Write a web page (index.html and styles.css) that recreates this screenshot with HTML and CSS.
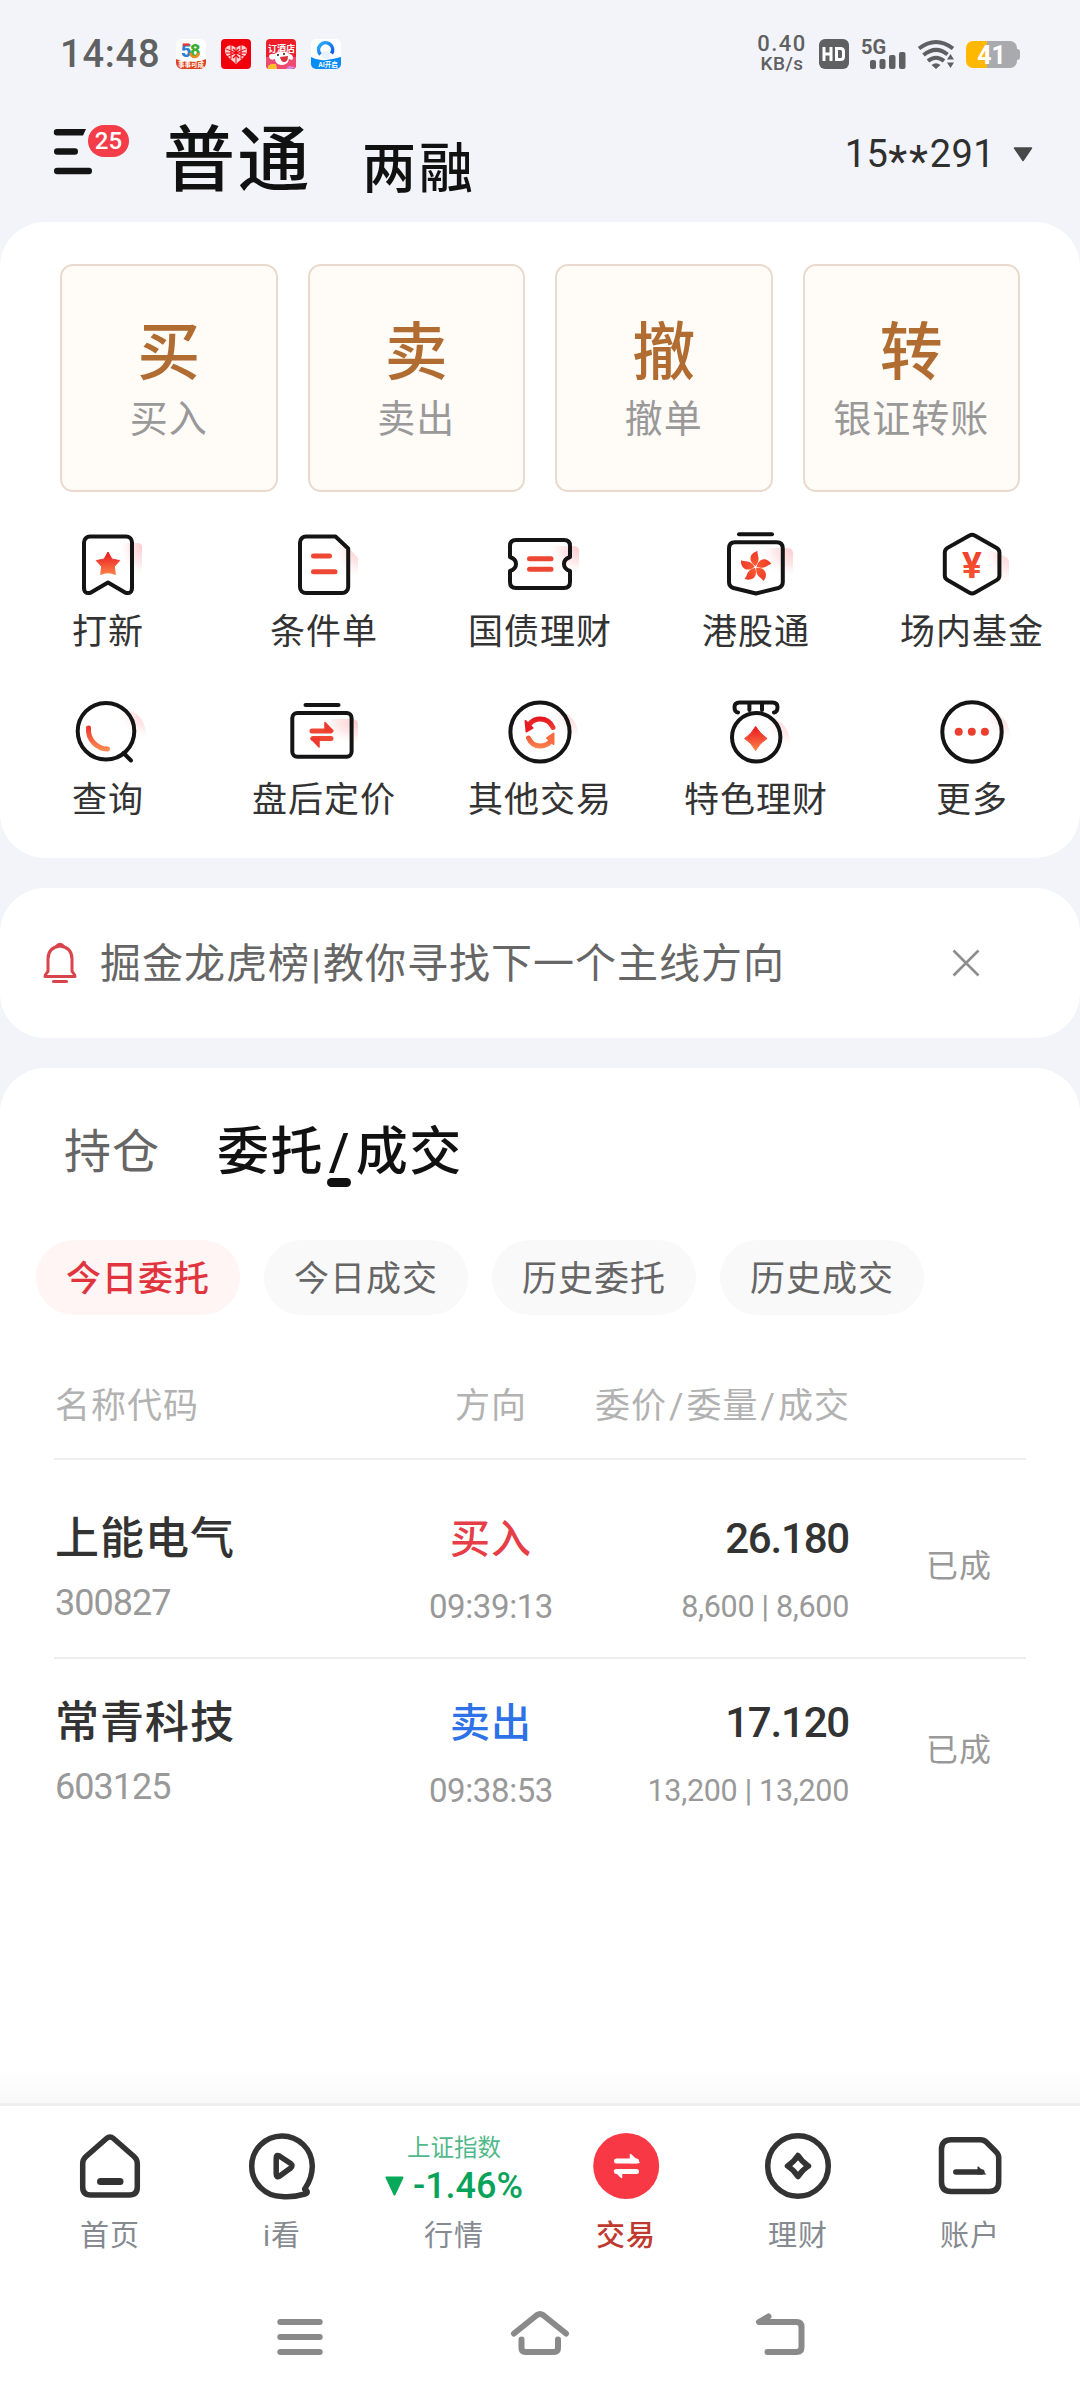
FILE: index.html
```html
<!DOCTYPE html>
<html lang="zh-CN">
<head>
<meta charset="utf-8">
<title>交易</title>
<link rel="stylesheet" href="styles.css">
</head>
<body>
<svg class="defs" width="0" height="0" aria-hidden="true">
  <defs>
    <linearGradient id="hot" x1="0" y1="0" x2="0" y2="1"><stop offset="0" stop-color="#ea1520"/><stop offset="1" stop-color="#fb8148"/></linearGradient>
    <linearGradient id="warm" x1="0" y1="0" x2="0" y2="1"><stop offset="0" stop-color="#ee3a28"/><stop offset="1" stop-color="#fb5a34"/></linearGradient>
    <linearGradient id="arc" gradientUnits="userSpaceOnUse" x1="0" y1="20" x2="0" y2="54"><stop offset="0" stop-color="#e50f1e"/><stop offset="1" stop-color="#fb8a50"/></linearGradient>
    <radialGradient id="glow" cx="1" cy="0.1" r="0.95"><stop offset="0" stop-color="#fccdcf"/><stop offset="0.45" stop-color="#fde3e4" stop-opacity="0.8"/><stop offset="0.9" stop-color="#ffffff" stop-opacity="0"/></radialGradient>
    <linearGradient id="q" x1="0" y1="0" x2="1" y2="1"><stop offset="0" stop-color="#30b0ff"/><stop offset="1" stop-color="#0a5ae0"/></linearGradient>
  </defs>
</svg>

<header class="statusbar">
  <div class="clock">14:48</div>
  <div class="apps">
    <svg width="30" height="30" viewBox="0 0 30 30"><rect width="30" height="30" rx="6" fill="#fff"/><path d="M0 20l5 2h20l5-2v4a6 6 0 0 1-6 6H6a6 6 0 0 1-6-6z" fill="#e0431c"/><text x="5" y="18" class="a58" fill="#2d7fd0">5</text><text x="14" y="18" class="a58" fill="#3fae2a">8</text><path d="M14.6 14a4 4 0 1 0 8 0" fill="none" stroke="#ee8a1d" stroke-width="2.6"/><path d="M6.8 5.600h6.500" stroke="#e33" stroke-width="2.400"/><text x="2" y="28" class="atiny" fill="#fff">事事可成</text></svg>
    <svg width="30" height="30" viewBox="0 0 30 30"><rect width="30" height="30" rx="4" fill="#f0000c"/><path d="M15 25L6 17Q3 13 4.500 9 8 5 12 7l3 2 3-2q4-2 7.500 2 1.500 4-1.500 8z" fill="#fbd6d6"/><path d="M5 10l20 8M25 10L5 18M10 6v14M20 6v14M15 9v15M5 14h20" stroke="#f0000c" stroke-width="1"/><path d="M12 10l3 3 3-3M12 19l3-3 3 3" fill="none" stroke="#f0000c" stroke-width="1.400"/></svg>
    <svg width="30" height="30" viewBox="0 0 30 30"><rect width="30" height="30" rx="4" fill="#ef1c2a"/><path d="M0 18h30v8a4 4 0 0 1-4 4H4a4 4 0 0 1-4-4z" fill="#ef4a70"/><text x="2" y="12.500" class="ahotel" fill="#fff">订酒店</text><path d="M3 18q0-4 5-3 7-5 14-1l4 2q2 3 0 5l-3-1q-1 6-8 6-6-1-6-6-5 2-6-2z" fill="#fff"/><path d="M14 18l8-1q0 6-4 6-3 0-4-5z" fill="#d8343a"/><circle cx="12" cy="16" r="1" fill="#222"/><circle cx="18" cy="15" r="1" fill="#222"/><path d="M2 30v-3l3-2h5l1 5z" fill="#fbbf2e"/><path d="M20 30l3-3 6 1-3 2z" fill="#d58be8"/></svg>
    <svg width="30" height="30" viewBox="0 0 30 30"><rect width="30" height="30" rx="5" fill="#fff"/><path d="M0 18q7 4 15 3t15-3v7a5 5 0 0 1-5 5H5a5 5 0 0 1-5-5z" fill="#0a8cf5"/><path d="M9.500 15.500a7 7 0 1 1 11-1" fill="none" stroke="url(#q)" stroke-width="3.600"/><circle cx="15" cy="16" r="4" fill="#e6f3ff"/><text x="7.500" y="28" class="atiny" fill="#fff">AI开启</text></svg>
  </div>
  <div class="spacer"></div>
  <div class="speed"><span>0.40</span><span>KB/s</span></div>
  <svg class="hd" width="30" height="30" viewBox="0 0 30 30"><rect width="30" height="30" rx="6" fill="#5f6062"/><path d="M5 8v14M12 8v14M5 15h7M17.500 9.500h4q3 0 3 3v5q0 3-3 3h-4z" fill="none" stroke="#fff" stroke-width="3"/></svg>
  <svg class="cell" width="46" height="30" viewBox="0 0 46 30"><text x="0" y="15" class="g5">5G</text><g fill="#5f6062"><rect x="9" y="21" width="6" height="9" rx="2"/><rect x="18.500" y="20" width="6" height="10" rx="2"/><rect x="28" y="16" width="6.500" height="14" rx="2"/><rect x="38" y="13" width="6.500" height="17" rx="2"/></g></svg>
  <svg class="wifi" width="36" height="30" viewBox="0 0 36 30"><g fill="none" stroke="#5f6062" stroke-width="4"><path d="M1 9.500Q18-3.500 35 9.500"/><path d="M5.500 16Q18 6 29.500 15.500"/><path d="M10 22Q18 15.500 26 22"/></g><path d="M13.500 26q4.500-3.500 9 0L18 30z" fill="#5f6062"/><path d="M32.500 15l3.500 5.500h-7zM32.500 29l3.500-5.500h-7z" fill="#5f6062"/></svg>
  <div class="battery"><span>41</span></div>
</header>

<div class="topbar">
  <div class="menu">
    <svg width="76" height="52" viewBox="0 0 76 52"><path d="M3 7h29l-3 6.400H3a3.200 3.200 0 0 1 0-6.400z" fill="#141414"/><path d="M3.200 29.500h17.600M3.200 49h31.600" stroke="#141414" stroke-width="6.400" stroke-linecap="round"/></svg>
    <b class="badge">25</b>
  </div>
  <h1 class="mode">普通</h1>
  <div class="mode-alt">两融</div>
  <div class="spacer"></div>
  <div class="account">15<i>**</i>291</div>
  <svg class="caret" width="20" height="15" viewBox="0 0 20 15"><path d="M1.500 1h17L10 13.500z" fill="#484848" stroke="#484848" stroke-width="1.500" stroke-linejoin="round"/></svg>
</div>

<main>
  <section class="card trade">
    <div class="actions">
      <a class="action"><b>买</b><span>买入</span></a>
      <a class="action"><b>卖</b><span>卖出</span></a>
      <a class="action"><b>撤</b><span>撤单</span></a>
      <a class="action"><b>转</b><span>银证转账</span></a>
    </div>
    <div class="tools">
      <a class="tool"><svg viewBox="0 0 72 72"><path d="M42 15h24a4 4 0 0 1 4 4v33H42z" fill="url(#glow)"/><path class="ln" d="M18 8.500h36a6 6 0 0 1 6 6v45q0 7-6.500 5.200L36 54.500 18.500 64.700Q12 66.500 12 59.500v-45a6 6 0 0 1 6-6z"/><path d="M36 24l3.900 7 7.800 1.600-5.300 5.900.9 8Q36 43 28.700 46.500l.9-8-5.300-5.900 7.800-1.600z" fill="url(#hot)" stroke="url(#hot)" stroke-linejoin="round"/></svg><span>打新</span></a>
      <a class="tool"><svg viewBox="0 0 72 72"><path d="M40 17h18l12 13v24H40z" fill="url(#glow)"/><path class="ln" d="M18 8.500h29.500l12.700 12V59a6 6 0 0 1-6 6H18a6 6 0 0 1-6-6V14.500a6 6 0 0 1 6-6z"/><path d="M25.500 28h16M25.500 43.700h21.500" class="red"/></svg><span>条件单</span></a>
      <a class="tool"><svg viewBox="0 0 72 72"><path d="M36 18h34a5 5 0 0 1 5 5v26H36z" fill="url(#glow)"/><path class="ln" d="M12 12h48q6 0 6 6v11q-6 2-6 7t6 7v11q0 6-6 6H12q-6 0-6-6V43q6-2 6-7t-6-7V18q0-6 6-6z"/><path d="M25.500 30.700h21.500M25.500 41.300h21.500" class="red"/></svg><span>国债理财</span></a>
      <a class="tool"><svg viewBox="0 0 72 72"><path d="M32 20h36a5 5 0 0 1 5 5v28H32z" fill="url(#glow)"/><path class="ln" d="M19 6.300h33"/><path class="ln" d="M15 14.300h41.500q6.300 0 6.300 6.300V54q0 4.500-4.500 6L36 65.500 13.500 60Q9 58.500 9 54V20.600q0-6.300 6-6.300z"/><g fill="url(#warm)" transform="translate(35.600 39)"><path d="M0-1C-8-6-6-14 2-16 1-12 6-8 0-1z"/><path transform="rotate(72)" d="M0-1C-8-6-6-14 2-16 1-12 6-8 0-1z"/><path transform="rotate(144)" d="M0-1C-8-6-6-14 2-16 1-12 6-8 0-1z"/><path transform="rotate(216)" d="M0-1C-8-6-6-14 2-16 1-12 6-8 0-1z"/><path transform="rotate(288)" d="M0-1C-8-6-6-14 2-16 1-12 6-8 0-1z"/></g></svg><span>港股通</span></a>
      <a class="tool"><svg viewBox="0 0 72 72"><path d="M40 16l28 12q5 2 5 6v28H44z" fill="url(#glow)"/><path class="ln" d="M33.500 7.500q2.600-1.600 5.200 0l22 12.400q2.700 1.600 2.700 4.600v23q0 3-2.700 4.600l-22 12.600q-2.600 1.600-5.200 0l-22-12.600Q8.800 50.500 8.800 47.500v-23q0-3 2.700-4.600z"/><text x="36" y="49.500" class="yen" fill="url(#warm)">¥</text></svg><span>场内基金</span></a>
      <a class="tool"><svg viewBox="0 0 72 72"><path d="M40 13h10q25 2 25 34H40z" fill="url(#glow)"/><circle class="ln" cx="34" cy="35.200" r="28.300"/><path class="ln" d="M51.500 57l7.500 7.500"/><path d="M16.500 32A19.500 19.500 0 0 0 35.500 53" fill="none" stroke="url(#arc)" stroke-width="5" stroke-linecap="round"/></svg><span>查询</span></a>
      <a class="tool"><svg viewBox="0 0 72 72"><path d="M22 23h43a5 5 0 0 1 5 5v24H22z" fill="url(#glow)"/><path class="ln" d="M17.500 9h33"/><rect class="ln" x="4.300" y="17" width="59.300" height="43.700" rx="5"/><path d="M24 35h18.500M43 42.500H25" class="red"/><path d="M37 27.500v-1l8 8.500h-8zM31 50v1l-8-8.500h8z" fill="#ef3a2e" stroke="#ef3a2e" stroke-width="1.500" stroke-linejoin="round"/></svg><span>盘后定价</span></a>
      <a class="tool"><svg viewBox="0 0 72 72"><path d="M40 13h10q25 3 25 34H40z" fill="url(#glow)"/><circle class="ln" cx="36" cy="36" r="29.600"/><g fill="none" stroke="url(#arc)" stroke-width="5" stroke-linecap="round"><path d="M49 31.500Q45 23 36 23q-6 0-10 4.500"/><path d="M24.500 42Q28 50 36 50q6 0 10-4"/></g><path d="M21.500 25l7 7-6 3.500z" fill="#e81a22" stroke="#e81a22" stroke-width="2" stroke-linejoin="round"/><path d="M49.500 48l-6.500-6 6.500-4.500z" fill="#fa6d42" stroke="#fa6d42" stroke-width="2" stroke-linejoin="round"/></svg><span>其他交易</span></a>
      <a class="tool"><svg viewBox="0 0 72 72"><path d="M38 21h10q23 3 23 34H38z" fill="url(#glow)"/><path class="ln" d="M18 16.500q-3.500-.5-3.500-5.500 0-4.500 5-4.500h33q5 0 5 4.500 0 5-3.500 5.500M29.400 6.500V14M42 6.500V14"/><circle class="ln" cx="36.200" cy="41.300" r="24.200"/><path d="M35.600 30.500q4.500 7.500 11.500 12-7 4-11.500 12-4.500-8-11-12 6.500-4 11-12z" fill="url(#hot)" stroke="url(#hot)" stroke-linejoin="round"/></svg><span>特色理财</span></a>
      <a class="tool"><svg viewBox="0 0 72 72"><path d="M40 14h10q25 3 25 34H40z" fill="url(#glow)"/><circle class="ln" cx="36" cy="36" r="29.700"/><g fill="#ec3f30"><circle cx="22.700" cy="35.700" r="4"/><circle cx="35.800" cy="35.700" r="4"/><circle cx="48.900" cy="35.700" r="4"/></g></svg><span>更多</span></a>
    </div>
  </section>

  <section class="card notice">
    <svg width="34" height="42" viewBox="0 0 34 42" fill="none" stroke="#d9434c" stroke-width="3"><path d="M2 34.500h30q0-2-3-5V17Q29 5.500 17 4 5 5.500 5 17v12.500q-3 3-3 5z" stroke-linejoin="round"/><path d="M13 5q4-5.500 8 0"/><path d="M10.500 39.500h13" stroke-linecap="round"/></svg>
    <p>掘金龙虎榜<i>|</i>教你寻找下一个主线方向</p>
    <svg class="close" width="28" height="28" viewBox="0 0 28 28"><path d="M1.500 1.500l25 25M26.500 1.500l-25 25" stroke="#8e8e8e" stroke-width="2.600"/></svg>
  </section>

  <section class="card orders">
    <nav class="tabs"><a class="tab">持仓</a><a class="tab tab-on">委托<i>/</i>成交</a></nav>
    <div class="pills"><a class="pill pill-on">今日委托</a><a class="pill">今日成交</a><a class="pill">历史委托</a><a class="pill">历史成交</a></div>
    <div class="table">
      <div class="row head"><span>名称代码</span><span class="mid">方向</span><span class="end">委价<i>/</i>委量<i>/</i>成交</span></div>
      <div class="row order first">
        <div><div class="name">上能电气</div><div class="code">300827</div></div>
        <div class="mid"><div class="side buy">买入</div><div class="time">09:39:13</div></div>
        <div class="end"><div class="price">26.180</div><div class="qty">8,600 | 8,600</div></div>
        <div class="state">已成</div>
      </div>
      <div class="row order">
        <div><div class="name">常青科技</div><div class="code">603125</div></div>
        <div class="mid"><div class="side sell">卖出</div><div class="time">09:38:53</div></div>
        <div class="end"><div class="price">17.120</div><div class="qty">13,200 | 13,200</div></div>
        <div class="state">已成</div>
      </div>
    </div>
  </section>
</main>

<nav class="tabbar">
  <a class="item"><svg viewBox="0 0 72 72"><path class="nl" d="M32.500 8.500q3.500-3 7 0l20.500 18q3.300 3 3.300 7V57q0 8-8 8H16.700q-8 0-8-8V33.500q0-4 3.300-7z"/><path d="M26.500 51.500h19.500" class="nl nl-7"/></svg><span>首页</span></a>
  <a class="item"><svg viewBox="0 0 72 72"><path class="nl" d="M59 58.500Q66.300 48 66.300 36A30.300 30.300 0 1 0 36 66.500q11 1 23-2.500 3.500-1 1.500-3.500-2.500-1-1.500-2z"/><path class="nl" d="M30.200 28q0-4 3.500-1.800l11 7.300q2.500 2.300 0 4.500l-11 8q-3.500 2-3.500-2z"/></svg><span>i看</span></a>
  <a class="item"><div class="quote"><small>上证指数</small><b><svg width="19" height="20" viewBox="0 0 19 20"><path d="M1.500 1.500h16L9.500 18.500z" fill="#08a95b" stroke="#08a95b" stroke-width="2" stroke-linejoin="round"/></svg>-1.46%</b></div><span>行情</span></a>
  <a class="item item-on"><svg viewBox="0 0 72 72"><circle cx="36.200" cy="36" r="33" fill="#f93846"/><path d="M26.500 31h20M26.500 41.500h20" stroke="#fff" stroke-width="5" stroke-linecap="round"/><path d="M40.500 25v-.5l8.500 8h-8.500zM31.500 47v.5l-7-7h7z" fill="#fff" stroke="#fff" stroke-width="1.500" stroke-linejoin="round"/></svg><span>交易</span></a>
  <a class="item"><svg viewBox="0 0 72 72"><circle class="nl" cx="36" cy="36" r="30.300"/><path class="nl" d="M36 25.500q4 6.500 10.500 10.500-6.500 4-10.500 10.500-4-6.500-10.500-10.500 6.500-4 10.500-10.500z"/></svg><span>理财</span></a>
  <a class="item"><svg viewBox="0 0 72 72"><path class="nl" d="M17 9.700h29.500q3.500 0 6 2.500l9.500 9.500q2.700 2.500 2.700 6V52q0 9.500-9.500 9.500H17q-9.500 0-9.500-9.500V19.200Q7.500 9.700 17 9.700z"/><path class="nl" d="M21.800 42h26"/><path d="M43.500 36.500h1l8 8h-9z" fill="#333"/></svg><span>账户</span></a>
</nav>

<footer class="sysnav">
  <svg width="60" height="60" viewBox="0 0 60 60"><path d="M10.300 15h39.400M10.300 30h39.400M10.300 45h39.400"/></svg>
  <svg width="60" height="60" viewBox="0 0 60 60"><path d="M4 26.500L27 8q3-2 6 0l23 18.500M11.500 32.500V41q0 4 4 4h28.500q4 0 4-4v-8.500"/></svg>
  <svg width="60" height="60" viewBox="0 0 60 60"><path d="M18.500 9.500L9 15h37.500q5 0 5 5v20q0 5-5 5H17.500"/></svg>
</footer>
</body>
</html>
```
FILE: styles.css
```css
* { box-sizing: border-box; }
html, body { margin: 0; padding: 0; }
body {
  width: 1080px;
  height: 2400px;
  display: flex;
  flex-direction: column;
  overflow: hidden;
  background: #f3f4f9;
  color: #333;
  font-family: Roboto, "Noto Sans CJK SC", sans-serif;
  letter-spacing: 1px;
}
i { font-style: normal; }
svg { display: block; overflow: visible; flex: none; }
.defs { position: absolute; }
.spacer { flex: 1; }

/* status bar */
.statusbar { flex: none; height: 108px; padding: 0 60px 0 60px; display: flex; align-items: center; color: #5f6062; }
.clock { width: 101px; font-size: 38px; font-weight: 500; letter-spacing: 0.8px; line-height: 40px; }
.apps { display: flex; gap: 15px; margin-left: 15px; }
.a58 { font: 900 18px Roboto; letter-spacing: 0; }
.atiny { font: 700 6.500px "Noto Sans CJK SC"; letter-spacing: 0; }
.ahotel { font: 700 9px "Noto Sans CJK SC"; letter-spacing: 0; }
.speed { display: flex; flex-direction: column; align-items: center; font-weight: 500; width: 50px; }
.speed span:first-child { font-size: 22px; line-height: 18px; letter-spacing: 1.500px; margin-top: -1px; }
.speed span:last-child { font-size: 19px; line-height: 17px; letter-spacing: 0.500px; margin-top: 2px; }
.hd { margin-left: 12px; }
.cell { margin-left: 12px; }
.g5 { font: 700 20px Roboto; letter-spacing: 0; fill: #5f6062; }
.wifi { margin-left: 11px; }
.battery { position: relative; width: 51px; height: 27px; margin-left: 12px; margin-right: 3px; border-radius: 7px; background: linear-gradient(90deg, #ffb800 21px, #a9aaae 21px); color: #fff; font-size: 25px; font-weight: 700; line-height: 29px; text-align: center; letter-spacing: 0; }
.battery::after { content: ""; position: absolute; left: 51px; top: 8px; width: 3px; height: 11px; border-radius: 0 3px 3px 0; background: #a9aaae; }

/* page header */
.topbar { flex: none; height: 114px; padding: 0 47px 0 54px; display: flex; align-items: flex-start; color: #111; }
.menu { position: relative; width: 76px; height: 52px; margin-top: 14px; }
.badge { position: absolute; left: 34px; top: 3px; width: 41px; height: 32px; border-radius: 16px; background: #f43d48; color: #fff; font-size: 24px; font-weight: 500; line-height: 33px; text-align: center; letter-spacing: 0; }
.mode { margin: 17px 0 0 33px; font-size: 72px; font-weight: 500; line-height: 72px; letter-spacing: 2.500px; }
.mode-alt { margin: 35px 0 0 50px; font-size: 54px; font-weight: 500; line-height: 54px; letter-spacing: 3px; }
.account { margin-top: 26px; font-size: 38px; font-weight: 400; line-height: 40px; letter-spacing: 0.400px; color: #2f2f2f; }
.account i { font-size: 44px; line-height: 0; position: relative; top: 10px; letter-spacing: 1.800px; }
.caret { margin: 39px 0 0 18px; }

/* cards */
main { flex: 1; display: flex; flex-direction: column; gap: 30px; }
.card { background: #fff; border-radius: 45px; }
.trade { padding: 42px 0 38px; }
.actions { display: grid; grid-template-columns: repeat(4, 1fr); gap: 30px; padding: 0 60px; }
.action { height: 228px; padding-top: 55px; border: 2px solid #e9dacd; border-radius: 13px; background: #fffbf7; display: flex; flex-direction: column; align-items: center; }
.action b { color: #b06c31; font-size: 63px; font-weight: 500; line-height: 64px; letter-spacing: 0; }
.action span { margin-top: 14px; color: #999; font-size: 38px; line-height: 40px; }
.tools { margin-top: 36px; display: grid; grid-template-columns: repeat(5, 1fr); row-gap: 43px; padding-bottom: 0; }
.trade .tools { margin-bottom: -1px; }
.tool { display: flex; flex-direction: column; align-items: center; }
.tool svg { width: 72px; height: 72px; }
.tool span { margin-top: 13px; font-size: 35px; line-height: 40px; white-space: nowrap; }
.ln { fill: none; stroke: #141414; stroke-width: 4; stroke-linecap: round; stroke-linejoin: round; }
.red { fill: none; stroke: #ee4733; stroke-width: 5; stroke-linecap: round; }
.yen { font: 700 37px Roboto; text-anchor: middle; letter-spacing: 0; }

.notice { height: 150px; padding: 0 100px 0 43px; display: flex; align-items: center; }
.notice p { flex: 1; margin: 2px 0 0 23px; font-size: 41px; line-height: 48px; color: #666; }
.notice i { padding: 0 1px; }

/* orders */
.orders { position: relative; flex: 1; border-radius: 45px 45px 0 0; padding-top: 36px; }
.orders::after { content: ""; position: absolute; left: 0; right: 0; bottom: 0; height: 36px; background: linear-gradient(#fff, #f9f9f9); }
.tabs { display: flex; height: 96px; padding-left: 64px; align-items: center; gap: 57px; }
.tab { font-size: 47px; line-height: 60px; color: #666; }
.tab-on { position: relative; padding-top: 1px; font-size: 52px; font-weight: 500; color: #111; letter-spacing: 1.500px; }
.tab-on i { padding: 0 5px; }
.tab-on::after { content: ""; position: absolute; left: 50%; bottom: -4px; width: 24px; height: 9px; margin-left: -13px; border-radius: 5px; background: #111; }
.pills { display: flex; gap: 24px; margin-top: 40px; padding-left: 36px; }
.pill { width: 204px; height: 75px; border-radius: 38px; background: #f9f9f9; color: #666; font-size: 35px; line-height: 79px; text-align: center; }
.pill-on { background: #fff5f4; color: #e0353f; font-weight: 500; }
.table { margin: 40px 54px 0; }
.row { display: grid; grid-template-columns: 316px 242px 237px 177px; }
.row > :first-child { padding-left: 1px; }
.head { height: 105px; border-bottom: 2px solid #eee; font-size: 35px; line-height: 104px; color: #b2b2b2; white-space: nowrap; }
.head i { padding: 0 2px; }
.mid { text-align: center; }
.head .end { justify-self: end; margin-right: -1px; }
.end { text-align: right; }
.order { height: 182px; }
.first { height: 199px; padding-top: 15px; border-bottom: 2px solid #eee; }
.name { margin-top: 40px; font-size: 44px; font-weight: 500; line-height: 48px; }
.code { margin-top: 22px; font-size: 36px; line-height: 36px; letter-spacing: -1px; color: #999; }
.side { margin-top: 41px; font-size: 40px; font-weight: 500; line-height: 48px; }
.buy { color: #e63d47; }
.sell { color: #2e72e8; }
.time { margin-top: 26px; font-size: 33px; line-height: 34px; letter-spacing: -0.400px; color: #999; }
.price { margin-top: 40px; font-size: 42px; font-weight: 500; line-height: 48px; letter-spacing: -1.200px; }
.qty { margin-top: 27px; font-size: 30.500px; line-height: 34px; letter-spacing: -0.300px; color: #999; white-space: nowrap; }
.state { margin: 73px 0 0 43px; font-size: 32px; line-height: 36px; text-align: center; color: #999; }

/* bottom navigation */
.tabbar { flex: none; height: 171px; padding: 24px 24px 0; border-top: 3px solid #efefef; background: #fff; display: grid; grid-template-columns: repeat(6, 172px); }
.item { display: flex; flex-direction: column; align-items: center; color: #858990; }
.item > svg { width: 72px; height: 72px; }
.item > span { margin-top: 18px; font-size: 29px; line-height: 32px; }
.item-on { color: #c0392f; font-weight: 500; }
.nl { fill: none; stroke: #333; stroke-width: 5.500; stroke-linecap: round; stroke-linejoin: round; }
.nl-7 { stroke-width: 7; }
.quote { height: 72px; padding-top: 4px; display: flex; flex-direction: column; align-items: center; letter-spacing: 0; }
.quote small { font-size: 23.500px; line-height: 28px; color: #4fb98a; }
.quote b { margin-top: 5px; display: flex; align-items: center; gap: 9px; font-size: 36px; font-weight: 500; line-height: 38px; color: #08a35b; }
.sysnav { flex: none; height: 126px; padding: 0 180px; background: #fff; display: grid; grid-template-columns: repeat(3, 240px); align-items: center; justify-items: center; }
.sysnav svg { fill: none; stroke: #8a8a8a; stroke-width: 6; stroke-linecap: round; stroke-linejoin: round; }
```
